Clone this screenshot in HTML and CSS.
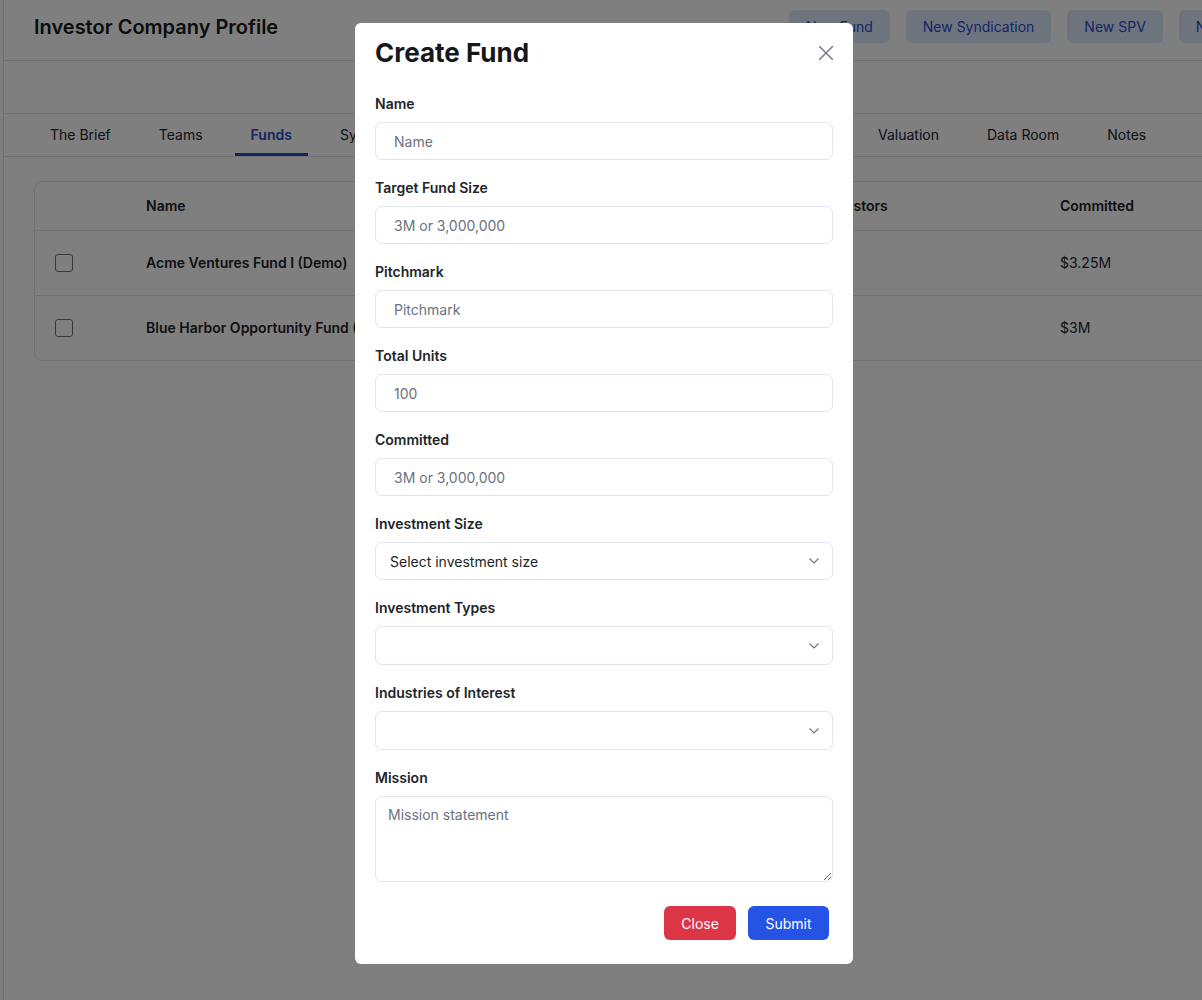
FILE: index.html
```html
<!DOCTYPE html>
<html lang="en">
<head>
<meta charset="utf-8">
<title>Investor Company Profile</title>
<link rel="stylesheet" href="styles.css">
</head>
<body>
<div class="app">
  <main class="main">
    <header class="page-header">
      <h1 class="page-title">Investor Company Profile</h1>
      <div class="actions">
        <button class="btn-soft">New Fund</button>
        <button class="btn-soft">New Syndication</button>
        <button class="btn-soft">New SPV</button>
        <button class="btn-soft">New Investor</button>
      </div>
    </header>
    <div class="subbar"></div>
    <nav class="tabs">
      <a class="tab">The Brief</a>
      <a class="tab">Teams</a>
      <a class="tab active">Funds</a>
      <a class="tab">Syndications</a>
      <a class="tab">SPVs</a>
      <a class="tab">Portfolios</a>
      <a class="tab">Investors</a>
      <a class="tab">Updates</a>
      <a class="tab">Valuation</a>
      <a class="tab">Data Room</a>
      <a class="tab">Notes</a>
    </nav>
    <section class="content">
      <div class="table">
        <div class="row head">
          <div class="cell"></div>
          <div class="cell">Name</div>
          <div class="cell">Target Fund Size</div>
          <div class="cell">Investors</div>
          <div class="cell">Committed</div>
        </div>
        <div class="row">
          <div class="cell"><span class="checkbox"></span></div>
          <div class="cell strong">Acme Ventures Fund I (Demo)</div>
          <div class="cell">$5M</div>
          <div class="cell">4</div>
          <div class="cell">$3.25M</div>
        </div>
        <div class="row last">
          <div class="cell"><span class="checkbox"></span></div>
          <div class="cell strong">Blue Harbor Opportunity Fund (Demo)</div>
          <div class="cell">$10M</div>
          <div class="cell">2</div>
          <div class="cell">$3M</div>
        </div>
      </div>
    </section>
  </main>
</div>

<div class="overlay"></div>

<div class="modal" role="dialog">
  <div class="modal-head">
    <h2 class="modal-title">Create Fund</h2>
    <button class="icon-close" aria-label="Close">
      <svg width="14" height="14" viewBox="0 0 14 14"><path d="M0.5 0.5 L13.5 13.5 M13.5 0.5 L0.5 13.5" stroke="#6b7280" stroke-width="1.4" fill="none" stroke-linecap="round"/></svg>
    </button>
  </div>
  <form class="form">
    <div class="field">
      <label class="label">Name</label>
      <input class="input" placeholder="Name">
    </div>
    <div class="field">
      <label class="label">Target Fund Size</label>
      <input class="input" placeholder="3M or 3,000,000">
    </div>
    <div class="field">
      <label class="label">Pitchmark</label>
      <input class="input" placeholder="Pitchmark">
    </div>
    <div class="field">
      <label class="label">Total Units</label>
      <input class="input" placeholder="100">
    </div>
    <div class="field">
      <label class="label">Committed</label>
      <input class="input" placeholder="3M or 3,000,000">
    </div>
    <div class="field">
      <label class="label">Investment Size</label>
      <div class="select">
        <span>Select investment size</span>
        <svg class="chev" width="10" height="6" viewBox="0 0 10 6"><polyline points="0.5,0.5 5,5 9.5,0.5" fill="none" stroke="#6b7280" stroke-width="1.1"/></svg>
      </div>
    </div>
    <div class="field">
      <label class="label">Investment Types</label>
      <div class="select multi">
        <span></span>
        <svg class="chev" width="10" height="6" viewBox="0 0 10 6"><polyline points="0.5,0.5 5,5 9.5,0.5" fill="none" stroke="#6b7280" stroke-width="1.1"/></svg>
      </div>
    </div>
    <div class="field">
      <label class="label">Industries of Interest</label>
      <div class="select multi">
        <span></span>
        <svg class="chev" width="10" height="6" viewBox="0 0 10 6"><polyline points="0.5,0.5 5,5 9.5,0.5" fill="none" stroke="#6b7280" stroke-width="1.1"/></svg>
      </div>
    </div>
    <div class="field">
      <label class="label">Mission</label>
      <textarea class="textarea" placeholder="Mission statement"></textarea>
    </div>
    <div class="footer">
      <button type="button" class="btn btn-danger">Close</button>
      <button type="button" class="btn btn-primary">Submit</button>
    </div>
  </form>
</div>
</body>
</html>
```

FILE: styles.css
```css
* { box-sizing: border-box; }

body {
  margin: 0;
  font-family: Inter, "Noto Sans", Arial, sans-serif;
  background: #ffffff;
  color: #212529;
  overflow: hidden;
}

.app {
  display: flex;
  min-height: 1000px;
  padding-left: 3px;
}

.main {
  flex: 1;
  min-width: 0;
  min-height: 1000px;
  border-left: 1px solid #dee2e6;
  overflow: hidden;
}

/* Header */
.page-header {
  display: grid;
  grid-template-columns: 755px max-content;
  align-items: center;
  height: 61px;
  padding: 0 0 7px 30px;
  border-bottom: 1px solid #dee2e6;
}

.page-title {
  margin: 0;
  font-size: 20px;
  font-weight: 600;
  line-height: 28px;
  color: #16181b;
}

.actions {
  display: flex;
  gap: 16px;
}

.btn-soft {
  height: 33px;
  padding: 0 17px;
  border: 0;
  border-radius: 6px;
  background: #dde8fd;
  color: #2a4bcf;
  font-family: inherit;
  font-size: 14px;
  font-weight: 400;
  white-space: nowrap;
}

.subbar {
  height: 53px;
  border-bottom: 1px solid #dee2e6;
}

/* Tabs */
.tabs {
  display: flex;
  gap: 16px;
  height: 43px;
  padding-left: 30px;
  border-bottom: 1px solid #dee2e6;
  white-space: nowrap;
}

.tab {
  display: flex;
  align-items: center;
  padding: 1px 16px 0;
  font-size: 14px;
  color: #212529;
  border-bottom: 3px solid transparent;
}

.tab.active {
  color: #2b48c8;
  font-weight: 600;
  border-bottom-color: #2b48c8;
}

/* Table */
.content {
  padding: 24px 0 0 30px;
}

.table {
  width: 1400px;
  border: 1px solid #dee2e6;
  border-radius: 8px;
}

.row {
  display: grid;
  grid-template-columns: 111px 360px 319px 235px 1fr;
  align-items: center;
  height: 65px;
  padding-bottom: 1px;
  border-bottom: 1px solid #dee2e6;
  font-size: 14px;
}

.row.head {
  height: 49px;
  font-weight: 600;
  color: #1e2125;
}

.row.last {
  height: 64px;
  border-bottom: 0;
}

.cell.strong {
  font-weight: 600;
  color: #1e2125;
}

.cell:first-child {
  padding-left: 20px;
  display: flex;
  align-items: center;
}

.checkbox {
  display: block;
  width: 18px;
  height: 18px;
  border: 1px solid #6f6f6f;
  border-radius: 3px;
  background: #fff;
}

/* Overlay + modal */
.overlay {
  position: fixed;
  inset: 0;
  background: rgba(0, 0, 0, 0.5);
}

.modal {
  position: fixed;
  left: 355px;
  top: 23px;
  width: 498px;
  padding: 15px 20px 24px;
  background: #ffffff;
  border-radius: 6px;
}

.modal-head {
  display: flex;
  align-items: center;
  justify-content: space-between;
  height: 30px;
}

.modal-title {
  margin: 0;
  font-size: 26px;
  font-weight: 700;
  line-height: 30px;
  color: #16181b;
}

.icon-close {
  display: flex;
  padding: 0;
  border: 0;
  background: none;
}

.form {
  display: flex;
  flex-direction: column;
  gap: 18px;
  margin: 26px 0 0;
}

.label {
  display: block;
  margin-bottom: 8px;
  font-size: 14px;
  font-weight: 600;
  line-height: 20px;
  color: #212529;
}

.input {
  display: block;
  width: 100%;
  height: 38px;
  padding: 0 18px;
  border: 1px solid #dfe4ee;
  border-radius: 7px;
  font-family: inherit;
  font-size: 14px;
  color: #212529;
  background: #fff;
}

.input::placeholder,
.textarea::placeholder {
  color: #6b7280;
  opacity: 1;
}

.select {
  display: flex;
  align-items: center;
  justify-content: space-between;
  height: 38px;
  padding: 0 13px 0 14px;
  border: 1px solid #dfe4ee;
  border-radius: 7px;
  font-size: 14px;
  color: #212529;
}

.select.multi {
  height: 39px;
}

.chev {
  display: block;
}

.textarea {
  display: block;
  width: 100%;
  height: 86px;
  padding: 8px 12px;
  border: 1px solid #dfe4ee;
  border-radius: 7px;
  font-family: inherit;
  font-size: 14px;
  line-height: 20px;
  color: #212529;
  resize: vertical;
}

.footer {
  display: flex;
  justify-content: flex-end;
  gap: 12px;
  margin-top: 6px;
  padding-right: 4px;
}

.btn {
  height: 34px;
  padding: 0 17px;
  border: 0;
  border-radius: 6px;
  font-family: inherit;
  font-size: 14px;
  color: #ffffff;
}

.btn-danger { background: #dc3545; }
.btn-primary { background: #2553e5; padding: 0 17.5px; }
```
